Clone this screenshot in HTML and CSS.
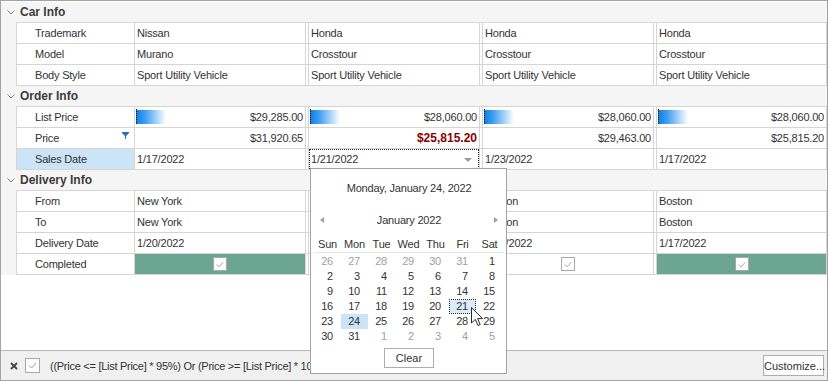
FILE: index.html
```html
<!DOCTYPE html>
<html lang="en">
<head>
  <meta charset="UTF-8">
  <meta name="viewport" content="width=device-width, initial-scale=1.0">
  <title>Vertical Grid - Orders</title>
  <link rel="stylesheet" href="styles.css">
</head>
<body>
  <div class="grid">
    <div class="main">
      <div class="cat"><svg class="chev" width="8" height="5" viewBox="0 0 8 5"><polyline points="0.5,0.5 4,4 7.5,0.5" fill="none" stroke="#8a8a8a" stroke-width="1"/></svg>Car Info</div>
      <div class="row first">
        <div class="indent"></div>
        <div class="line">
          <div class="rh">Trademark</div>
          <div class="cell">Nissan</div>
          <div class="cell">Honda</div>
          <div class="cell">Honda</div>
          <div class="cell">Honda</div>
        </div>
      </div>
      <div class="row">
        <div class="indent"></div>
        <div class="line">
          <div class="rh">Model</div>
          <div class="cell">Murano</div>
          <div class="cell">Crosstour</div>
          <div class="cell">Crosstour</div>
          <div class="cell">Crosstour</div>
        </div>
      </div>
      <div class="row">
        <div class="indent"></div>
        <div class="line">
          <div class="rh">Body Style</div>
          <div class="cell">Sport Utility Vehicle</div>
          <div class="cell">Sport Utility Vehicle</div>
          <div class="cell">Sport Utility Vehicle</div>
          <div class="cell">Sport Utility Vehicle</div>
        </div>
      </div>

      <div class="cat"><svg class="chev" width="8" height="5" viewBox="0 0 8 5"><polyline points="0.5,0.5 4,4 7.5,0.5" fill="none" stroke="#8a8a8a" stroke-width="1"/></svg>Order Info</div>
      <div class="row first">
        <div class="indent"></div>
        <div class="line">
          <div class="rh">List Price</div>
          <div class="cell num bar">$29,285.00</div>
          <div class="cell num bar">$28,060.00</div>
          <div class="cell num bar">$28,060.00</div>
          <div class="cell num bar">$28,060.00</div>
        </div>
      </div>
      <div class="row">
        <div class="indent"></div>
        <div class="line">
          <div class="rh">Price<svg class="funnel" width="7" height="7" viewBox="0 0 7 7"><polygon points="0,0 7,0 7,1 4,4 4,7 3,7 3,4 0,1" fill="#1f6fc5"/></svg></div>
          <div class="cell num">$31,920.65</div>
          <div class="cell num low">$25,815.20</div>
          <div class="cell num">$29,463.00</div>
          <div class="cell num">$25,815.20</div>
        </div>
      </div>
      <div class="row">
        <div class="indent"></div>
        <div class="line">
          <div class="rh sel">Sales Date</div>
          <div class="cell">1/17/2022</div>
          <div class="cell edit">1/21/2022<span class="drop"></span></div>
          <div class="cell">1/23/2022</div>
          <div class="cell">1/17/2022</div>
        </div>
      </div>

      <div class="cat"><svg class="chev" width="8" height="5" viewBox="0 0 8 5"><polyline points="0.5,0.5 4,4 7.5,0.5" fill="none" stroke="#8a8a8a" stroke-width="1"/></svg>Delivery Info</div>
      <!-- second record's cells sit under the open date editor -->
      <div class="row first">
        <div class="indent"></div>
        <div class="line">
          <div class="rh">From</div>
          <div class="cell">New York</div>
          <div class="cell"></div>
          <div class="cell">Boston</div>
          <div class="cell">Boston</div>
        </div>
      </div>
      <div class="row">
        <div class="indent"></div>
        <div class="line">
          <div class="rh">To</div>
          <div class="cell">New York</div>
          <div class="cell"></div>
          <div class="cell">Boston</div>
          <div class="cell">Boston</div>
        </div>
      </div>
      <div class="row">
        <div class="indent"></div>
        <div class="line">
          <div class="rh">Delivery Date</div>
          <div class="cell">1/20/2022</div>
          <div class="cell"></div>
          <div class="cell">1/23/2022</div>
          <div class="cell">1/17/2022</div>
        </div>
      </div>
      <div class="row">
        <div class="indent"></div>
        <div class="line">
          <div class="rh">Completed</div>
          <div class="cell chk done"><span class="box"><svg width="13" height="13" viewBox="0 0 13 13"><polyline points="3,6.5 5.5,9 10,4" fill="none" stroke="#a0a0a0" stroke-width="1"/></svg></span></div>
          <div class="cell chk"><span class="box"><svg width="13" height="13" viewBox="0 0 13 13"><polyline points="3,6.5 5.5,9 10,4" fill="none" stroke="#a0a0a0" stroke-width="1"/></svg></span></div>
          <div class="cell chk"><span class="box"><svg width="13" height="13" viewBox="0 0 13 13"><polyline points="3,6.5 5.5,9 10,4" fill="none" stroke="#a0a0a0" stroke-width="1"/></svg></span></div>
          <div class="cell chk done"><span class="box"><svg width="13" height="13" viewBox="0 0 13 13"><polyline points="3,6.5 5.5,9 10,4" fill="none" stroke="#a0a0a0" stroke-width="1"/></svg></span></div>
        </div>
      </div>
    </div>

    <div class="filter">
      <svg class="close" width="8" height="8" viewBox="0 0 8 8"><path d="M1 1 L7 7 M7 1 L1 7" stroke="#444" stroke-width="1.8"/></svg>
      <span class="fbox"><svg width="13" height="13" viewBox="0 0 13 13"><polyline points="3,6.5 5.5,9 10,4" fill="none" stroke="#a0a0a0" stroke-width="1"/></svg></span>
      <span class="ftext">((Price &lt;= [List Price] * 95%) Or (Price &gt;= [List Price] * 105%))</span>
      <button class="customize">Customize...</button>
    </div>

    <!-- date editor dropdown -->
    <div class="popup">
      <div class="pop-title">Monday, January 24, 2022</div>
      <div class="pop-nav"><span class="arr prev"></span><span>January 2022</span><span class="arr next"></span></div>
      <div class="days">
        <span>Sun</span><span>Mon</span><span>Tue</span><span>Wed</span><span>Thu</span><span>Fri</span><span>Sat</span>
      </div>
      <div class="dates">
        <span class="other">26</span><span class="other">27</span><span class="other">28</span><span class="other">29</span><span class="other">30</span><span class="other">31</span><span>1</span>
        <span>2</span><span>3</span><span>4</span><span>5</span><span>6</span><span>7</span><span>8</span>
        <span>9</span><span>10</span><span>11</span><span>12</span><span>13</span><span>14</span><span>15</span>
        <span>16</span><span>17</span><span>18</span><span>19</span><span>20</span><span class="focus">21</span><span>22</span>
        <span>23</span><span class="today">24</span><span>25</span><span>26</span><span>27</span><span>28</span><span>29</span>
        <span>30</span><span>31</span><span class="other">1</span><span class="other">2</span><span class="other">3</span><span class="other">4</span><span class="other">5</span>
      </div>
      <div class="pop-foot"><button class="clear">Clear</button></div>
    </div>

    <svg class="cursor" width="13" height="20" viewBox="0 0 13 20"><polygon points="0.5,0.5 0.5,16 4.3,12.4 7,18.5 9.2,17.6 6.6,11.6 11.5,11.6" fill="#fff" stroke="#2a2a2a" stroke-width="1" stroke-linejoin="miter"/></svg>
  </div>
</body>
</html>
```

FILE: styles.css
```css
* {
  box-sizing: border-box;
}
body {
  margin: 0;
  font-family: "Liberation Sans", Arial, sans-serif;
  font-size: 11px;
  letter-spacing: -0.2px;
  color: #333;
  background: #fff;
}
.grid {
  position: relative;
  width: 828px;
  height: 381px;
  border: 1px solid #a3a3a3;
  display: flex;
  flex-direction: column;
  overflow: hidden;
}
.main {
  flex: 1;
  padding-top: 1px;
  overflow: hidden;
}
.cat {
  height: 20px;
  display: flex;
  align-items: center;
  background: #f5f5f5;
  font-size: 12px;
  font-weight: bold;
  letter-spacing: 0;
  color: #3c3c3c;
  padding-left: 6px;
}
.chev {
  margin-right: 5px;
}
.row {
  display: flex;
}
.indent {
  width: 15px;
  background: #f5f5f5;
}
.line {
  flex: 1;
  display: flex;
  height: 21px;
  border-bottom: 1px solid #d5d5d5;
}
.row.first .line {
  height: 22px;
  border-top: 1px solid #d5d5d5;
}
.rh {
  width: 118px;
  flex: 0 0 118px;
  border-left: 1px solid #d5d5d5;
  padding-left: 18px;
  line-height: 20px;
  display: flex;
  justify-content: space-between;
  padding-right: 5px;
}
.rh.sel {
  background: #cce4f7;
}
.funnel {
  margin-top: 4px;
}
.cell {
  position: relative;
  flex: 0 0 172px;
  margin-right: 2px;
  border-left: 1px solid #d5d5d5;
  border-right: 1px solid #d5d5d5;
  padding: 0 2px;
  line-height: 20px;
  white-space: nowrap;
  overflow: hidden;
}
.cell:last-child {
  flex: 1 1 0;
  margin-right: 0;
}
.num {
  text-align: right;
}
.bar {
  background-image:
    repeating-linear-gradient(to bottom, #000 0 1px, transparent 1px 2px),
    linear-gradient(to right, #0b7fe6, #3d9ef0 30%, #ffffff);
  background-repeat: no-repeat;
  background-position: 1px 2px, 1px 3px;
  background-size: 1px 16px, 30px 14px;
}
.low {
  color: #8b0000;
  font-weight: bold;
  font-size: 12px;
  letter-spacing: 0;
}
.edit::after {
  content: "";
  position: absolute;
  inset: 0;
  border: 1px dotted #222;
}
.drop {
  position: absolute;
  right: 7px;
  top: 9px;
  border-left: 4px solid transparent;
  border-right: 4px solid transparent;
  border-top: 4px solid #9a9a9a;
}
.chk {
  display: flex;
  align-items: center;
  justify-content: center;
}
.done {
  background: #6ca591;
}
.box, .fbox {
  width: 15px;
  height: 15px;
  border: 1px solid #a8a8a8;
  background: #fff;
  display: flex;
  align-items: center;
  justify-content: center;
}
.box {
  width: 14px;
  height: 14px;
}
.filter {
  height: 30px;
  flex: 0 0 30px;
  border-top: 1px solid #b8b8b8;
  background: #f0f0f0;
  display: flex;
  align-items: center;
  padding: 0 3px 0 9px;
}
.fbox {
  margin-left: 7px;
}
.ftext {
  margin-left: 10px;
  white-space: nowrap;
  letter-spacing: -0.27px;
}
.customize {
  margin-left: auto;
  height: 21px;
  width: 61px;
  padding: 0;
  border: 1px solid #adadad;
  background: #fdfdfd;
  font: inherit;
  color: #333;
}
.popup {
  position: absolute;
  left: 309px;
  top: 167px;
  width: 197px;
  border: 1px solid #a3a3a3;
  background: #fff;
  padding: 9px 2px 5px 3px;
  z-index: 2;
}
.pop-title {
  line-height: 20px;
  text-align: center;
}
.pop-nav {
  margin-top: 12px;
  height: 20px;
  display: flex;
  justify-content: space-between;
  align-items: center;
  padding: 0 6px;
}
.arr {
  width: 0;
  height: 0;
  border-top: 3px solid transparent;
  border-bottom: 3px solid transparent;
}
.arr.prev {
  border-right: 4px solid #a0a0a0;
}
.arr.next {
  border-left: 4px solid #a0a0a0;
}
.days {
  margin-top: 7px;
  display: grid;
  grid-template-columns: repeat(7, 27px);
  border-bottom: 1px solid #e3e3e3;
}
.days span {
  line-height: 15px;
  text-align: center;
}
.dates {
  margin-top: 1px;
  display: grid;
  grid-template-columns: repeat(7, 27px);
  grid-auto-rows: 15px;
}
.dates span {
  line-height: 15px;
  text-align: right;
  padding-right: 8px;
}
.dates .other {
  color: #a0a0a0;
}
.dates .today {
  background: #cce4f7;
}
.dates .focus {
  background: #dcebf8;
  outline: 1px dotted #333;
  outline-offset: -1px;
}
.pop-foot {
  margin-top: 4px;
  display: flex;
  justify-content: center;
}
.clear {
  width: 50px;
  height: 20px;
  padding: 0;
  border: 1px solid #adadad;
  background: #fff;
  font: inherit;
  color: #333;
}
.cursor {
  position: absolute;
  left: 470px;
  top: 306px;
  z-index: 3;
}
```
